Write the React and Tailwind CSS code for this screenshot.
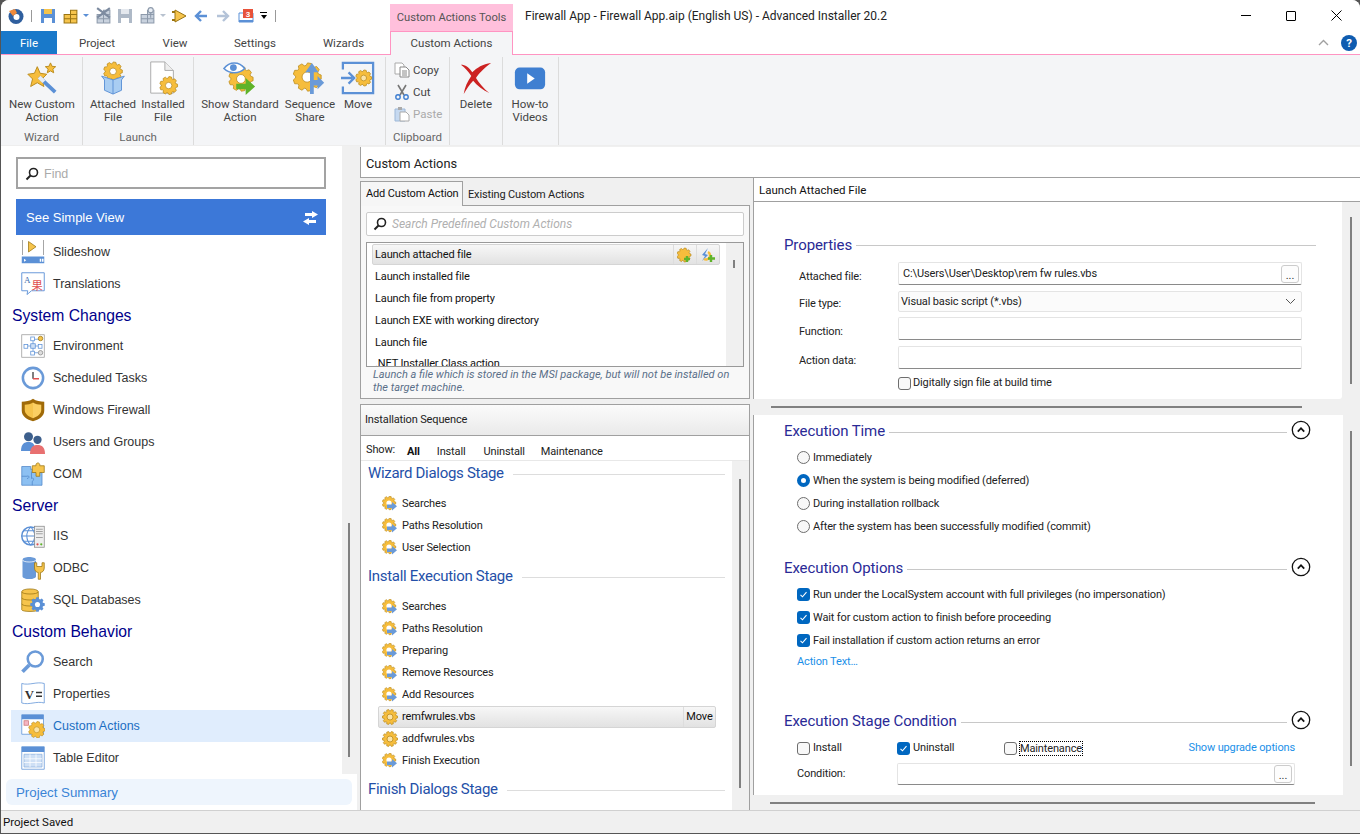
import React from "react";

const gearPath = (cx, cy, r1, r2, n = 8) => {
  const pts = [];
  const step = (Math.PI * 2) / n;
  for (let i = 0; i < n; i++) {
    const a = i * step;
    [[-0.3, r1], [-0.16, r2], [0.16, r2], [0.3, r1]].forEach(([o, r]) => {
      const t = a + o * step * 1.3;
      pts.push(`${(cx + Math.cos(t) * r).toFixed(2)},${(cy + Math.sin(t) * r).toFixed(2)}`);
    });
  }
  return `M${pts.join("L")}Z`;
};

// orange gear used all over the app
function Gear({ cx = 16, cy = 16, r = 10, hole = "#fff" }) {
  return (
    <g>
      <path d={gearPath(cx, cy, r * 0.82, r, 9)} fill="#f6bd3c" stroke="#b98a1c" strokeWidth="0.8" />
      <circle cx={cx} cy={cy} r={r * 0.36} fill={hole} stroke="#b98a1c" strokeWidth="0.8" />
    </g>
  );
}

function Svg({ size = 24, box = 32, children, className = "" }) {
  return (
    <svg width={size} height={size} viewBox={`0 0 ${box} ${box}`} className={`shrink-0 ${className}`}>
      {children}
    </svg>
  );
}

const Bricks = ({ gray, cross, pin }) => {
  const f = gray ? "#c9d2de" : "#f6c44c";
  const s = gray ? "#8d9aab" : "#9a7412";
  return (
    <Svg size={17} box={16}>
      <path d="M8 3h6v4H8zM2 7h6v4H2zM8 7h6v4H8zM2 11h6v4H2zM8 11h6v4H8z" fill={f} stroke={s} strokeWidth="1" />
      {cross && <path d="M2 1l12 9M14 1L2 10" stroke="#7d8ba0" strokeWidth="2" />}
      {pin && (
        <>
          <circle cx="11" cy="3" r="2.4" fill="#e8edf4" stroke="#8d9aab" />
          <path d="M11 5v5" stroke="#8d9aab" />
        </>
      )}
    </Svg>
  );
};

const SaveIcon = ({ gray }) => {
  const c = gray ? "#aeb9c7" : "#5b90d6";
  return (
    <Svg size={16} box={16}>
      <path d="M1 1h14v14H1z" fill={c} />
      <path d="M4 1h8v5H4z" fill={gray ? "#e4e8ee" : "#f6c44c"} />
      <path d="M4 10h8v5H4z" fill="#fff" />
    </Svg>
  );
};

const GearArrow = () => (
  <Svg size={16} box={16}>
    <path d={gearPath(7, 7, 5.4, 6.8, 9)} fill="#f6bd3c" stroke="#b98a1c" strokeWidth="0.6" />
    <circle cx="7" cy="7" r="2.6" fill="#fff" />
    <path d="M5 8.5h5V6l5 4.2-5 4.3v-2.6H5z" fill="#6a9ad8" />
  </Svg>
);

const SmallGear = () => (
  <Svg size={16} box={16}>
    <path d={gearPath(8, 8, 6, 7.6, 10)} fill="#f6bd3c" stroke="#b98a1c" strokeWidth="0.7" />
    <circle cx="8" cy="8" r="3" fill="#fbe3a6" stroke="#b98a1c" strokeWidth="0.8" />
  </Svg>
);

const Chevron = () => (
  <svg width="20" height="20" viewBox="0 0 20 20" className="shrink-0 -mt-[5px]">
    <circle cx="10" cy="10" r="8.7" fill="#fff" stroke="#111" strokeWidth="1.3" />
    <path d="M6.8 11.6 10 8.2l3.2 3.4" fill="none" stroke="#111" strokeWidth="1.8" />
  </svg>
);

function Qat() {
  return (
    <div className="w-[389px] h-full flex items-center pl-[7px] shrink-0">
      <Svg size={16} box={16}>
        <circle cx="8" cy="8.5" r="7.5" fill="#2f5f9e" />
        <circle cx="8.5" cy="9" r="3" fill="#fff" />
        <path d="M1 3l6-2 2 4-4 3z" fill="#ef8a3a" />
      </Svg>
      <div className="w-px h-[12px] bg-[#999] ml-[7px] mr-[8px]" />
      <SaveIcon />
      <div className="w-[6px]" />
      <Bricks />
      <span className="ml-[4px] mr-[6px] border-x-[3px] border-t-[3px] border-x-transparent border-t-[#5b8fd6]" />
      <Bricks gray cross />
      <div className="w-[5px]" />
      <SaveIcon gray />
      <div className="w-[6px]" />
      <Bricks gray pin />
      <span className="ml-[4px] mr-[5px] border-x-[3px] border-t-[3px] border-x-transparent border-t-[#b8c2cf]" />
      <Svg size={16} box={16}>
        <path d="M4 2l11 6-11 6z" fill="#f6c44c" stroke="#9a7412" />
        <path d="M1 4h3M1 12h3" stroke="#9a7412" strokeWidth="2" />
      </Svg>
      <div className="w-[7px]" />
      <Svg size={14} box={14}>
        <path d="M7 2 2 7l5 5M2 7h11" fill="none" stroke="#5b90d6" strokeWidth="2.4" />
      </Svg>
      <div className="w-[8px]" />
      <Svg size={14} box={14}>
        <path d="M7 2l5 5-5 5M12 7H1" fill="none" stroke="#b4c3d8" strokeWidth="2.4" />
      </Svg>
      <div className="w-[8px]" />
      <Svg size={16} box={16}>
        <path d="M1 5h14v9H1z" fill="#fff" stroke="#5b90d6" />
        <path d="M1 12h14v2H1z" fill="#5b90d6" />
        <rect x="5" y="1" width="10" height="9" fill="#e8523a" />
        <text x="10" y="8.5" fontSize="8" fill="#fff" textAnchor="middle" fontFamily="Liberation Sans" fontWeight="700">3</text>
      </Svg>
      <div className="ml-[6px] flex flex-col items-center gap-[2px]">
        <span className="w-[7px] h-px bg-black" />
        <span className="border-x-[3.5px] border-t-[4px] border-x-transparent border-t-black" />
      </div>
      <div className="w-px h-[12px] bg-[#999] ml-[8px]" />
    </div>
  );
}

function RibbonBtn({ className, icon, lines }) {
  return (
    <div className={`flex flex-col items-center shrink-0 ${className}`}>
      <div className="h-[34px] mt-[6px] flex items-center justify-center">{icon}</div>
      <div className="mt-[3px] text-center leading-[13px] text-[#444] whitespace-nowrap">
        {lines.map((l) => (
          <div key={l}>{l}</div>
        ))}
      </div>
    </div>
  );
}

function Group({ className, inner = "", label, children }) {
  return (
    <div className={`flex flex-col shrink-0 border-r border-[#dcdcdc] mt-[2px] h-[88px] ${className}`}>
      <div className={`flex flex-1 -mt-[2px] ${inner}`}>{children}</div>
      <div className="h-[15px] leading-[15px] text-center text-[#666]">{label}</div>
    </div>
  );
}

const WizardIcon = () => (
  <Svg size={34} box={36}>
    <path d="M13 6l3 7 7 1-5 5 2 8-7-4-7 4 2-8-5-5 7-1z" fill="#f6bd3c" stroke="#b98a1c" />
    <path d="M27 2l1.6 3.6 3.9.4-3 2.6.9 3.9-3.4-2-3.4 2 .9-3.9-3-2.6 3.9-.4z" fill="#f6bd3c" stroke="#b98a1c" />
    <path d="M15 17l17 16" stroke="#5b90d6" strokeWidth="4" />
    <path d="M15 17l5 5" stroke="#e8edf4" strokeWidth="4" />
  </Svg>
);

const BoxIcon = () => (
  <Svg size={34} box={36}>
    <Gear cx={18} cy={11} r={10} />
    <path d="M6 16l12 4 12-4-3 4v11l-9 4-9-4V20z" fill="#a9cdf2" stroke="#5b90d6" />
    <path d="M18 20v15" stroke="#5b90d6" />
  </Svg>
);

const FileGearIcon = () => (
  <Svg size={34} box={36}>
    <path d="M5 1h15l9 9v24H5z" fill="#fff" stroke="#a9a9a9" />
    <path d="M20 1v9h9" fill="#eee" stroke="#a9a9a9" />
    <Gear cx={24} cy={26} r={9.5} hole="#fff" />
  </Svg>
);

const EyeGearIcon = () => (
  <Svg size={34} box={36}>
    <Gear cx={19} cy={19} r={13} />
    <path d="M1 8c6-8 16-8 22 0-6 6-16 6-22 0z" fill="#fff" stroke="#5b90d6" strokeWidth="1.6" />
    <circle cx="11" cy="7" r="3.6" fill="#5b90d6" />
    <path d="M14 24h10v-6l10 9-10 9v-6H14z" fill="#5fb32a" />
  </Svg>
);

const ShareIcon = () => (
  <Svg size={34} box={36}>
    <Gear cx={15} cy={17} r={15} />
    <path d="M18 35V12h-5l7-10 7 10h-5v8l4 0v-4l7 7-7 7v-4h-4v9z" fill="#6a9ad8" />
  </Svg>
);

const MoveIcon = () => (
  <Svg size={34} box={36}>
    <path d="M2 9V2h32v32H2v-7" fill="none" stroke="#5b90d6" strokeWidth="2.4" />
    <path d="M0 18h12M8 12l6 6-6 6" fill="none" stroke="#5b90d6" strokeWidth="2.4" />
    <Gear cx={24} cy={18} r={8.5} hole="#fbe3a6" />
  </Svg>
);

const DeleteIcon = () => (
  <Svg size={34} box={36}>
    <path d="M2 4c5 0 8 2 12 8 5-5 11-9 20-10C26 8 21 13 18 18c3 5 8 11 14 16-7-3-13-8-17-13-4 4-7 9-10 14 1-7 4-13 8-19C10 11 6 7 2 4z" fill="#cc2222" />
  </Svg>
);

const VideoIcon = () => (
  <Svg size={34} box={36}>
    <rect x="2" y="7" width="32" height="23" rx="5" fill="#3f7fd1" />
    <path d="M15 13l8 5.5-8 5.5z" fill="#fff" />
  </Svg>
);

function ClipRow({ icon, text, muted }) {
  return (
    <div className={`h-[22px] flex items-center pl-[8px] gap-[3px] ${muted ? "text-[#aaa]" : "text-[#444]"}`}>
      {icon}
      <span>{text}</span>
    </div>
  );
}

function Ribbon() {
  return (
    <div className="h-[91px] bg-[#f4f5f7] flex shrink-0 border-b border-[#eee] text-[11.5px]">
      <Group className="w-[82px]" label="Wizard">
        <RibbonBtn className="w-[82px]" icon={<WizardIcon />} lines={["New Custom", "Action"]} />
      </Group>
      <Group className="w-[111px]" inner="pl-[5px]" label="Launch">
        <RibbonBtn className="w-[50px]" icon={<BoxIcon />} lines={["Attached", "File"]} />
        <RibbonBtn className="w-[50px]" icon={<FileGearIcon />} lines={["Installed", "File"]} />
      </Group>
      <Group className="w-[192px]" inner="pl-[6px]" label="">
        <RibbonBtn className="w-[80px]" icon={<EyeGearIcon />} lines={["Show Standard", "Action"]} />
        <RibbonBtn className="w-[60px]" icon={<ShareIcon />} lines={["Sequence", "Share"]} />
        <RibbonBtn className="w-[36px]" icon={<MoveIcon />} lines={["Move"]} />
      </Group>
      <Group className="w-[64px]" label="Clipboard">
        <div className="pt-[4px]">
          <ClipRow
            text="Copy"
            icon={
              <Svg size={16} box={16}>
                <path d="M1 1h7l2 2v9H1z" fill="#fff" stroke="#aaa" />
                <path d="M6 5h6l3 3v7H6z" fill="#fff" stroke="#888" />
                <path d="M8 9h5M8 11h5M8 13h5" stroke="#888" />
              </Svg>
            }
          />
          <ClipRow
            text="Cut"
            icon={
              <Svg size={16} box={16}>
                <path d="M4 1l6 10M12 1L6 11" stroke="#777" strokeWidth="1.6" />
                <circle cx="4" cy="13" r="2.2" fill="none" stroke="#3f7fd1" strokeWidth="1.4" />
                <circle cx="12" cy="13" r="2.2" fill="none" stroke="#3f7fd1" strokeWidth="1.4" />
              </Svg>
            }
          />
          <ClipRow
            muted
            text="Paste"
            icon={
              <Svg size={16} box={16}>
                <path d="M1 3h10v12H1z" fill="#c6d9f0" stroke="#9db8d8" />
                <path d="M4 1h4v3H4z" fill="#aaa" />
                <path d="M6 6h6l3 3v6H6z" fill="#fff" stroke="#aaa" />
              </Svg>
            }
          />
        </div>
      </Group>
      <Group className="w-[53px]" label="">
        <RibbonBtn className="w-[52px]" icon={<DeleteIcon />} lines={["Delete"]} />
      </Group>
      <Group className="w-[56px]" label="">
        <RibbonBtn className="w-[54px]" icon={<VideoIcon />} lines={["How-to", "Videos"]} />
      </Group>
    </div>
  );
}

const navIcons = {
  slideshow: (
    <>
      <path d="M2 0v20M30 0v20" stroke="#888" />
      <path d="M10 2l10 7-10 7z" fill="#f6c44c" stroke="#9a7412" />
      <path d="M1 22h30v9H1z" fill="#5b90d6" />
      <path d="M4 25l3 2-3 2zM25 25h2v4h-2zM28 25h2v4h-2z" fill="#fff" />
    </>
  ),
  translations: (
    <>
      <path d="M1 1h30v24H14l-6 5 1-5H1z" fill="#fff" stroke="#5b90d6" strokeWidth="1.2" />
      <text x="4" y="14" fontSize="12" fill="#3f6fb0" fontFamily="Liberation Serif">A</text>
      <text x="14" y="24" fontSize="15" fill="#e05050" fontFamily="Noto Sans CJK SC">果</text>
    </>
  ),
  env: (
    <>
      <rect x="1" y="1" width="30" height="30" fill="#fff" stroke="#999" />
      <path d="M16 7v18M7 16h18M16 7h9M16 25h9" stroke="#5b90d6" />
      <rect x="13" y="4" width="5" height="5" fill="#fff" stroke="#5b90d6" />
      <rect x="4" y="14" width="5" height="5" fill="#fff" stroke="#5b90d6" />
      <rect x="13" y="13" width="6" height="6" fill="#cfe0f5" stroke="#5b90d6" />
      <rect x="23" y="14" width="5" height="5" fill="#fff" stroke="#5b90d6" />
      <rect x="13" y="23" width="5" height="5" fill="#fff" stroke="#5b90d6" />
      <circle cx="26" cy="6" r="3" fill="#f6c44c" stroke="#9a7412" />
      <circle cx="26" cy="25" r="3" fill="#ddd" stroke="#888" />
    </>
  ),
  clock: (
    <>
      <circle cx="16" cy="16" r="13.5" fill="#fff" stroke="#6a9ad8" strokeWidth="3.4" />
      <path d="M16 8v9" stroke="#555" strokeWidth="2" />
      <path d="M16 17h8" stroke="#e05050" strokeWidth="2" />
    </>
  ),
  shield: (
    <>
      <path d="M16 1c4 3 10 4 15 4v12c0 7-7 12-15 14C8 29 1 24 1 17V5c5 0 11-1 15-4z" fill="#a06a08" />
      <path d="M16 6v21c-6-2-11-6-11-11V9c4 0 8-1 11-3z" fill="#f6c44c" />
      <path d="M16 6v21c6-2 11-6 11-11V9c-4 0-8-1-11-3z" fill="#fbcf62" />
    </>
  ),
  users: (
    <>
      <circle cx="10" cy="9" r="6" fill="#3d5f8c" />
      <path d="M0 28c0-9 4-12 10-12s9 3 9 12z" fill="#5b90d6" />
      <circle cx="22" cy="13" r="5.5" fill="#3d5f8c" />
      <path d="M12 32c0-9 4-12 10-12s10 3 10 12z" fill="#e87070" />
    </>
  ),
  com: (
    <>
      <path d="M1 6h12v4c3-2 4 2 1 3v1h14v17H1z" fill="#8cc0f2" stroke="#4f86c8" />
      <path d="M1 19h7c3-2 4 3 0 3M14 14v8c3-2 4 2 1 4v5" fill="none" stroke="#4f86c8" />
      <path d="M15 5h5c-1-5 6-5 5 0h6v9h-6v5h-5v-5h-5z" fill="#f6c44c" stroke="#9a7412" />
    </>
  ),
  iis: (
    <>
      <circle cx="13" cy="16" r="12" fill="#fff" stroke="#5b90d6" strokeWidth="2" />
      <path d="M1 16h24M3 9h20M3 23h20M13 4c-7 7-7 17 0 24M13 4c7 7 7 17 0 24" fill="none" stroke="#5b90d6" strokeWidth="1.4" />
      <rect x="18" y="3" width="13" height="28" fill="#eee" stroke="#888" />
      <path d="M20 7h9M20 10h9M20 13h9M20 18h9" stroke="#888" />
      <circle cx="22" cy="27" r="1.5" fill="#e05050" />
      <circle cx="27" cy="27" r="1.5" fill="#5fb32a" />
    </>
  ),
  odbc: (
    <>
      <path d="M2 5c0-5 18-5 18 0v22c0 5-18 5-18 0z" fill="#6a9ad8" />
      <path d="M2 5c0 4 18 4 18 0" fill="none" stroke="#fff" />
      <path d="M18 9v7c0 4 3 6 5 6v9h3v-9c2 0 5-2 5-6V9h-3v5h-7V9z" fill="#f6c44c" stroke="#9a7412" />
    </>
  ),
  sql: (
    <>
      <path d="M1 5c0-5 22-5 22 0v24c0 3-22 3-22 0z" fill="#f6c44c" stroke="#9a7412" />
      <path d="M1 5c0 4 22 4 22 0M1 13c0 4 22 4 22 0M1 21c0 4 22 4 22 0" fill="none" stroke="#9a7412" />
      <path d={gearPath(22, 22, 7.6, 9.8, 8)} fill="#5b90d6" />
      <circle cx="22" cy="22" r="3.4" fill="#fff" />
    </>
  ),
  search: (
    <>
      <circle cx="19" cy="12" r="10" fill="#fff" stroke="#6a9ad8" strokeWidth="3.4" />
      <path d="M11 20L2 29" stroke="#6a9ad8" strokeWidth="5" />
    </>
  ),
  props: (
    <>
      <path d="M1 2c10 3 20-3 30 0v26c-10-3-20 3-30 0z" fill="#fff" stroke="#5b90d6" />
      <text x="5" y="22" fontSize="17" fontWeight="700" fill="#333" fontFamily="Liberation Serif">V</text>
      <path d="M20 14h8M20 19h8" stroke="#333" strokeWidth="2" />
    </>
  ),
  custom: (
    <>
      <path d="M1 1h29v26H1z" fill="#fff" stroke="#5b90d6" />
      <path d="M1 1h29v6H1z" fill="#5b90d6" />
      <rect x="4" y="9" width="6" height="6" fill="#f4b5c2" stroke="#c77" />
      <Gear cx={21} cy={21} r={11} hole="#fbe3a6" />
    </>
  ),
  table: (
    <>
      <path d="M1 1h30v30H1z" fill="#fff" stroke="#5b90d6" />
      <path d="M1 1h30v7H1z" fill="#5b90d6" />
      <path d="M4 11h24v17H4z" fill="#cfe0f5" stroke="#8cb0de" />
      <path d="M4 17h24M4 22h24M12 11v17M20 11v17" stroke="#fff" />
    </>
  ),
};

function NavItem({ icon, text, active }) {
  return (
    <div className={`h-[32px] ml-[10px] w-[319px] pl-[10px] flex items-center gap-[8px] ${active ? "bg-[#e0edfd] text-[#1b6ec2]" : "text-[#333]"}`}>
      <Svg size={24}>{navIcons[icon]}</Svg>
      <span>{text}</span>
    </div>
  );
}

const NavHead = ({ children }) => (
  <div className="h-[30px] pl-[11px] pt-[2px] flex items-center text-[15.7px] text-[#00008b]">{children}</div>
);

const FindGlass = () => (
  <Svg size={14} box={14}>
    <circle cx="8.5" cy="5.5" r="4" fill="none" stroke="#222" strokeWidth="1.6" />
    <path d="M5.5 8.5L1.5 12.5" stroke="#222" strokeWidth="2" />
  </Svg>
);

function Sidebar() {
  return (
    <div className="w-[359px] shrink-0 flex flex-col font-['Liberation_Sans',sans-serif] text-[12.5px]">
      <div className="flex h-[628px]">
        <div className="w-[341px] bg-white pt-[11px]">
          <div className="ml-[15px] w-[310px] h-[32px] border-2 border-[#a3a3a3] flex items-center pl-[7px] pt-px gap-[5px] text-[12.5px] text-[#aaa]">
            <FindGlass />
            <span>Find</span>
          </div>
          <div className="ml-[15px] mt-[10px] mb-px w-[310px] h-[36px] bg-[#3c78d8] text-white text-[13px] flex items-center justify-between pl-[10px] pr-[8px] pt-px">
            <span>See Simple View</span>
            <svg width="15" height="14" viewBox="0 0 15 14">
              <path d="M9 0l6 3.5L9 7V5H2V2h7zM6 7v2h7v3H6v2L0 10.5z" fill="#fff" />
            </svg>
          </div>
          <NavItem icon="slideshow" text="Slideshow" />
          <NavItem icon="translations" text="Translations" />
          <NavHead>System Changes</NavHead>
          <NavItem icon="env" text="Environment" />
          <NavItem icon="clock" text="Scheduled Tasks" />
          <NavItem icon="shield" text="Windows Firewall" />
          <NavItem icon="users" text="Users and Groups" />
          <NavItem icon="com" text="COM" />
          <NavHead>Server</NavHead>
          <NavItem icon="iis" text="IIS" />
          <NavItem icon="odbc" text="ODBC" />
          <NavItem icon="sql" text="SQL Databases" />
          <NavHead>Custom Behavior</NavHead>
          <NavItem icon="search" text="Search" />
          <NavItem icon="props" text="Properties" />
          <NavItem icon="custom" text="Custom Actions" active />
          <NavItem icon="table" text="Table Editor" />
        </div>
        <div className="flex-1 pl-[6px] pt-[377px]">
          <div className="w-[2px] h-[234px] bg-[#808080]" />
        </div>
      </div>
      <div className="w-[356px] h-[36px] bg-white px-[5px] pt-[5px]">
        <div className="h-[26px] rounded-[6px] bg-[#eef5fd] pl-[10px] pt-px flex items-center text-[13.3px] text-[#3a84d6]">Project Summary</div>
      </div>
    </div>
  );
}

const listRows = ["Launch installed file", "Launch file from property", "Launch EXE with working directory", "Launch file"];

function AddPanel() {
  return (
    <>
      <div className="h-[27px] flex items-end pt-[3px] shrink-0">
        <div className="h-[25px] w-[103px] bg-[#f6f6f6] border border-b-0 border-[#a0a0a0] pl-[5px] flex items-center text-[#111] relative top-px z-10 whitespace-nowrap">Add Custom Action</div>
        <div className="h-[24px] pl-[5px] pt-[3px] flex items-center text-[#222] whitespace-nowrap">Existing Custom Actions</div>
      </div>
      <div className="h-[194px] bg-[#f8f8f8] border border-[#a0a0a0] px-[5px] pt-[6px] shrink-0">
        <div className="h-[24px] bg-white border border-[#ccc] rounded-[2px] flex items-center pl-[6px] gap-[5px] text-[#b0b0b0] italic text-[12px] tracking-normal">
          <FindGlass />
          <span>Search Predefined Custom Actions</span>
        </div>
        <div className="mt-[6px] h-[125px] bg-white border border-[#999] flex overflow-hidden">
          <div className="w-[359px] pl-[5px] pt-px shrink-0">
            <div className="h-[21px] mb-px w-[348px] flex rounded-[2px] border border-[#d5d5d5] bg-gradient-to-b from-[#f7f7f7] to-[#e2e2e2] items-center">
              <span className="flex-1 pl-[2px] text-[#111]">Launch attached file</span>
              <span className="w-[23px] h-full border-l border-[#ddd] flex items-center justify-center">
                <Svg size={16} box={16}>
                  <path d={gearPath(7, 8, 5.6, 7, 9)} fill="#f6bd3c" stroke="#b98a1c" strokeWidth="0.7" />
                  <path d="M10 9v6M7 12h6" stroke="#5fb32a" strokeWidth="2.4" />
                </Svg>
              </span>
              <span className="w-[23px] h-full border-l border-[#ddd] flex items-center justify-center">
                <Svg size={16} box={16}>
                  <path d="M8 1L2 8l3 1-3 5 6-6-3-1z" fill="#5b90d6" />
                  <path d="M8 5a4 4 0 1 1-4 7" fill="none" stroke="#f6bd3c" strokeWidth="2.4" />
                  <path d="M11 8v7M8 11.5h7" stroke="#5fb32a" strokeWidth="2.4" />
                </Svg>
              </span>
            </div>
            {listRows.map((t) => (
              <div key={t} className="h-[22px] pl-[3px] flex items-center text-[#111]">{t}</div>
            ))}
            <div className="h-[15px] pl-[3px] pt-[3px] overflow-hidden text-[#111] whitespace-nowrap">.NET Installer Class action</div>
          </div>
          <div className="flex-1 bg-[#f0f0f0] pl-[7px] pt-[17px]">
            <div className="w-[2px] h-[8px] bg-[#808080]" />
          </div>
        </div>
        <div className="mt-[1px] pl-[7px] pr-[10px] italic leading-[13px] text-[#5a6f88] tracking-normal">
          Launch a file which is stored in the MSI package, but will not be installed on the target machine.
        </div>
      </div>
    </>
  );
}

const StageHead = ({ children }) => (
  <div className="h-[26px] flex items-center px-[7px] gap-[9px] text-[15px] tracking-[-0.3px] text-[#2450a8]">
    <span className="whitespace-nowrap -mt-[2px]">{children}</span>
    <span className="flex-1 h-px bg-[#ddd]" />
  </div>
);

const StageItem = ({ text }) => (
  <div className="h-[22px] flex items-center pl-[21px] gap-[4px] text-[#222]">
    <GearArrow />
    <span>{text}</span>
  </div>
);

function SequencePanel() {
  return (
    <div className="mt-[5px] flex-1 flex flex-col border border-[#a0a0a0] border-b-0 bg-white min-h-0">
      <div className="h-[31px] shrink-0 bg-gradient-to-b from-[#fbfbfb] to-[#eaeaea] border-b border-[#a0a0a0] pl-[4px] flex items-center text-[#222]">Installation Sequence</div>
      <div className="h-[25px] shrink-0 border-b border-[#e8e8e8] flex items-center pl-[5px] pt-[7px] text-[#222]">
        <span className="w-[41px] -mt-[3px]">Show:</span>
        <span className="font-bold text-[#111]">All</span>
        <span className="ml-[17px]">Install</span>
        <span className="ml-[18px]">Uninstall</span>
        <span className="ml-[16px]">Maintenance</span>
      </div>
      <div className="flex-1 flex min-h-0">
        <div className="w-[371px] shrink-0 overflow-hidden">
          <StageHead>Wizard Dialogs Stage</StageHead>
          <div className="pt-[6px] pb-[5px]">
            <StageItem text="Searches" />
            <StageItem text="Paths Resolution" />
            <StageItem text="User Selection" />
          </div>
          <StageHead>Install Execution Stage</StageHead>
          <div className="pt-[6px] pb-[5px]">
            <StageItem text="Searches" />
            <StageItem text="Paths Resolution" />
            <StageItem text="Preparing" />
            <StageItem text="Remove Resources" />
            <StageItem text="Add Resources" />
            <div className="h-[22px] ml-[17px] w-[338px] flex items-center rounded-[2px] border border-[#d5d5d5] bg-gradient-to-b from-[#f7f7f7] to-[#e2e2e2] text-[#111]">
              <span className="flex-1 flex items-center pl-[3px] gap-[4px]">
                <SmallGear />
                remfwrules.vbs
              </span>
              <span className="w-[32px] h-full border-l border-[#ddd] flex items-center justify-center">Move</span>
            </div>
            <div className="h-[22px] flex items-center pl-[21px] gap-[4px] text-[#222]">
              <SmallGear />
              <span>addfwrules.vbs</span>
            </div>
            <StageItem text="Finish Execution" />
          </div>
          <StageHead>Finish Dialogs Stage</StageHead>
        </div>
        <div className="flex-1 bg-[#f0f0f0] pl-[7px] pt-[18px]">
          <div className="w-[2px] h-[309px] bg-[#808080]" />
        </div>
      </div>
    </div>
  );
}

const CheckBox = ({ checked }) =>
  checked ? (
    <span className="w-[13px] h-[13px] rounded-[3px] bg-[#0067c0] flex items-center justify-center shrink-0">
      <svg width="9" height="9" viewBox="0 0 9 9">
        <path d="M1.5 4.8l2 2 4-4.6" fill="none" stroke="#fff" strokeWidth="1.1" />
      </svg>
    </span>
  ) : (
    <span className="w-[13px] h-[13px] rounded-[3px] border border-[#6e6e6e] bg-[#f8f8f8] shrink-0" />
  );

const Radio = ({ checked }) => (
  <span className={`w-[13px] h-[13px] rounded-full shrink-0 ${checked ? "border-[4px] border-[#0067c0] bg-white" : "border border-[#6e6e6e] bg-[#f8f8f8]"}`} />
);

const SectionHead = ({ children, collapse, className = "" }) => (
  <div className={`h-[34px] flex items-center pl-[30px] gap-[4px] ${collapse ? "pr-[32px]" : "pr-[26px]"} ${className}`}>
    <span className={`text-[15px] tracking-[-0.1px] text-[#2a2a96] whitespace-nowrap ${collapse ? "-mt-[2px]" : ""}`}>{children}</span>
    <span className="flex-1 h-px bg-[#c8c8c8]" />
    {collapse && <Chevron />}
  </div>
);

const Row = ({ children }) => (
  <div className="h-[23px] flex items-center pl-[43px] gap-[3px] text-[#222]">{children}</div>
);

const Dots = () => (
  <span className="w-[18px] h-[18px] mr-[2px] rounded-[3px] border border-[#ccc] bg-[#fdfdfd] flex items-end justify-center leading-[12px] text-[#333]">...</span>
);

function FormRow({ label, className, children, select }) {
  const box = select ? "bg-[#fbfbfb] border-[#b5b5b5] pl-[2px] pr-[5px]" : "bg-white border-b-[#8a8a8a] pl-[4px]";
  return (
    <div className="flex items-center pl-[45px]">
      <span className="w-[99px] text-[#222]">{label}</span>
      <div className={`w-[404px] rounded-[2px] flex items-center justify-between border border-[#e4e4e4] text-[#222] ${box} ${className}`}>
        {children}
      </div>
    </div>
  );
}

function RightPanel() {
  return (
    <div className="w-[607px] shrink-0 flex flex-col">
      <div className="h-[24px] shrink-0 bg-white border-l border-b border-[#a0a0a0] pl-[5px] flex items-center text-[11.5px] tracking-normal text-[#111]">Launch Attached File</div>
      <div className="h-[197px] shrink-0 flex border-l border-[#a0a0a0]">
        <div className="w-[588px] bg-white rounded-br-[3px]">
          <div className="h-[26px]" />
          <SectionHead>Properties</SectionHead>
          <FormRow label="Attached file:" className="h-[23px] mb-[6px]">
            C:\Users\User\Desktop\rem fw rules.vbs
            <Dots />
          </FormRow>
          <FormRow label="File type:" className="h-[21px] mb-[5px]" select>
            Visual basic script (*.vbs)
            <svg width="11" height="7" viewBox="0 0 11 7">
              <path d="M1 1l4.5 4.5L10 1" fill="none" stroke="#555" />
            </svg>
          </FormRow>
          <FormRow label="Function:" className="h-[23px] mb-[6px]" />
          <FormRow label="Action data:" className="h-[23px] mb-[7px]" />
          <div className="pl-[144px] flex items-center gap-[2px] text-[#222]">
            <CheckBox />
            <span>Digitally sign file at build time</span>
          </div>
        </div>
        <div className="flex-1 pl-[8px] pt-[15px]">
          <div className="w-[2px] h-[167px] bg-[#808080]" />
        </div>
      </div>
      <div className="h-[16px] shrink-0 flex items-center pl-[18px]">
        <div className="w-[531px] h-[2px] bg-[#808080]" />
      </div>
      <div className="h-[380px] shrink-0 flex border-l border-[#a0a0a0]">
        <div className="w-[589px] bg-white">
          <SectionHead collapse className="-mb-[3px]">Execution Time</SectionHead>
          <Row><Radio /><span>Immediately</span></Row>
          <Row><Radio checked /><span>When the system is being modified (deferred)</span></Row>
          <Row><Radio /><span>During installation rollback</span></Row>
          <Row><Radio /><span>After the system has been successfully modified (commit)</span></Row>
          <div className="h-[14px]" />
          <SectionHead collapse className="-mb-[3px]">Execution Options</SectionHead>
          <Row><CheckBox checked /><span>Run under the LocalSystem account with full privileges (no impersonation)</span></Row>
          <Row><CheckBox checked /><span>Wait for custom action to finish before proceeding</span></Row>
          <Row><CheckBox checked /><span>Fail installation if custom action returns an error</span></Row>
          <div className="h-[19px] pl-[43px] flex items-center text-[#1a8fe8]">Action Text…</div>
          <div className="h-[34px]" />
          <SectionHead collapse className="-mb-[5px]">Execution Stage Condition</SectionHead>
          <div className="h-[28px] flex items-center pl-[43px] pr-[48px] text-[#222]">
            <CheckBox />
            <span className="ml-[3px] w-[84px]">Install</span>
            <CheckBox checked />
            <span className="ml-[3px] w-[91px]">Uninstall</span>
            <CheckBox />
            <span className="ml-[2px] border border-dotted border-black leading-[13px]">Maintenance</span>
            <span className="ml-auto text-[#1a8fe8]">Show upgrade options</span>
          </div>
          <div className="mt-px flex items-center pl-[43px] text-[#222]">
            <span className="w-[100px]">Condition:</span>
            <div className="w-[398px] h-[22px] flex items-center justify-end border border-[#e4e4e4] border-b-[#8a8a8a] rounded-[2px]">
              <Dots />
            </div>
          </div>
        </div>
        <div className="flex-1 pl-[7px] pt-[16px]">
          <div className="w-[2px] h-[335px] bg-[#808080]" />
        </div>
      </div>
      <div className="h-[16px] shrink-0 flex items-center pl-[17px]">
        <div className="w-[545px] h-[2px] bg-[#808080]" />
      </div>
    </div>
  );
}

export default function App() {
  return (
    <div className="w-[1360px] h-[834px] bg-[#555] overflow-hidden">
      <div className="h-[833px] ml-px flex flex-col bg-[#f0f0f0] rounded-t-[8px] overflow-hidden font-['Roboto',sans-serif] text-[12px] leading-[14px]">
        {/* title bar */}
        <div className="h-[31px] shrink-0 bg-white flex items-center">
          <Qat />
          <div className="w-[123px] h-[27px] mt-[4px] bg-[#ffc0dc] flex items-center justify-center text-[11.2px] text-[#555] shrink-0">Custom Actions Tools</div>
          <div className="ml-[12px] text-[#222]">Firewall App - Firewall App.aip (English US) - Advanced Installer 20.2</div>
          <div className="ml-auto flex items-center gap-[35px] pr-[18px]">
            <span className="w-[10px] h-px bg-black" />
            <span className="w-[10px] h-[10px] rounded-[1px] border border-black" />
            <svg width="11" height="11" viewBox="0 0 11 11">
              <path d="M.5.5l10 10M10.5.5l-10 10" stroke="#000" />
            </svg>
          </div>
        </div>
        {/* tabs */}
        <div className="h-[24px] shrink-0 bg-white flex items-stretch border-b border-[#ff94c2] text-[11.5px] text-[#444] relative">
          <div className="w-[56px] bg-[#1979ca] text-white flex items-center justify-center">File</div>
          <div className="w-[80px] flex items-center justify-center">Project</div>
          <div className="w-[76px] flex items-center justify-center">View</div>
          <div className="w-[84px] flex items-center justify-center">Settings</div>
          <div className="w-[93px] flex items-center justify-center">Wizards</div>
          <div className="w-[123px] h-[24px] pb-[2px] bg-[#f4f5f7] border border-b-0 border-[#ff94c2] flex items-center justify-center">Custom Actions</div>
          <div className="ml-auto flex items-center gap-[12px] pr-[3px]">
            <svg width="11" height="7" viewBox="0 0 11 7">
              <path d="M1 6l4.5-4.5L10 6" fill="none" stroke="#a0a0a0" strokeWidth="1.4" />
            </svg>
            <span className="w-[16px] h-[16px] rounded-full bg-[#0f5cb0] text-white font-bold flex items-center justify-center">?</span>
          </div>
        </div>
        <Ribbon />
        {/* body */}
        <div className="flex-1 flex min-h-0">
          <Sidebar />
          <div className="flex-1 min-w-0 flex flex-col pt-[1px] text-[11px] tracking-[-0.14px]">
            <div className="h-[31px] shrink-0 bg-white border-l border-b border-[#a0a0a0] pl-[5px] pt-[3px] flex items-center text-[12.8px] tracking-normal text-[#222]">Custom Actions</div>
            <div className="flex-1 flex min-h-0">
              <div className="w-[390px] shrink-0 flex flex-col mr-[3px]">
                <AddPanel />
                <SequencePanel />
              </div>
              <RightPanel />
            </div>
          </div>
        </div>
        {/* status bar */}
        <div className="h-[23px] shrink-0 border-t border-[#d0d0d0] pl-[2px] flex items-center text-[11.5px] text-[#111]">Project Saved</div>
      </div>
    </div>
  );
}
